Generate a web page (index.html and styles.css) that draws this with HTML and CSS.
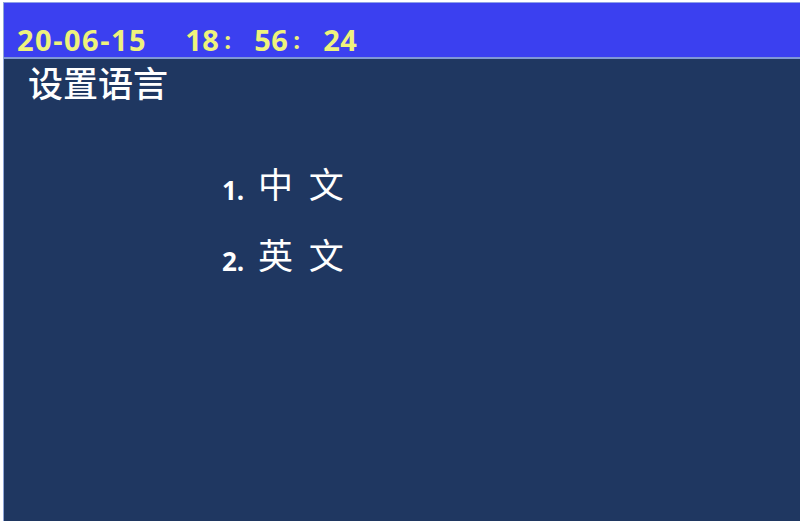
FILE: index.html
```html
<!DOCTYPE html>
<html>
<head>
<meta charset="utf-8">
<link rel="stylesheet" href="styles.css">
</head>
<body>
<div class="screen">
  <div class="topbar">
    <span class="date">20-06-15</span>
    <span class="time">18</span><span class="colon">:</span><span class="time">56</span><span class="colon">:</span><span class="time">24</span>
  </div>
  <div class="main">
    <div class="title">设置语言</div>
    <div class="menu">
      <div class="item"><span class="num">1.</span><span class="label">中 文</span></div>
      <div class="item"><span class="num">2.</span><span class="label">英 文</span></div>
    </div>
  </div>
</div>
</body>
</html>
```
FILE: styles.css
```css
html, body {
  margin: 0;
  padding: 0;
  background: #ffffff;
}
.screen {
  width: 797px;
  height: 519px;
  margin: 2px 0 0 3px;
  display: flex;
  flex-direction: column;
  border-left: 1px solid #8fa6d8;
  box-sizing: border-box;
}
.topbar {
  height: 57px;
  background: #3b40f0;
  border-top: 1px solid #8ea0e8;
  border-bottom: 2px solid #7f98d6;
  box-sizing: border-box;
  display: flex;
  align-items: flex-end;
  padding: 0 0 1px 13px;
  font-family: "Open Sans", sans-serif;
  font-weight: 700;
  font-size: 29px;
  line-height: 32px;
  color: #eef27c;
}
.date {
  letter-spacing: 1.5px;
  margin-right: 38px;
}
.time {
  letter-spacing: 0.5px;
}
.colon {
  margin: 0 23px 0 5px;
  font-size: 24px;
}
.main {
  flex: 1;
  background: #1f3761;
  color: #ffffff;
  font-family: "Noto Sans CJK SC", sans-serif;
}
.title {
  font-size: 35px;
  line-height: 40px;
  padding: 3px 0 0 24px;
  font-weight: 500;
}
.menu {
  display: flex;
  flex-direction: column;
  gap: 26px;
  padding: 61px 0 0 218px;
}
.item {
  display: flex;
  align-items: baseline;
  line-height: 40px;
}
.num {
  font-family: "Open Sans", sans-serif;
  font-weight: 700;
  font-size: 26px;
  width: 36px;
  position: relative;
  top: 2px;
}
.label {
  font-size: 35px;
  letter-spacing: 4px;
}
```
